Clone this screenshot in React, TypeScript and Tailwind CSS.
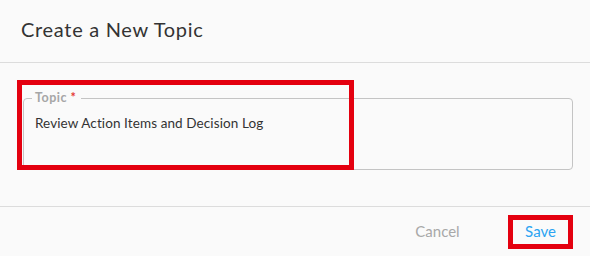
import React from 'react';

export default function App() {
  return (
    <div className="w-[590px] h-[256px] bg-[#fafafa] flex flex-col overflow-hidden" style={{ fontFamily: 'Lato, "Noto Sans", sans-serif' }}>
      {/* header */}
      <div className="h-[63px] shrink-0 border-b border-[#dcdcdc] pl-[21px] pt-[17px]">
        <h1 className="text-[20px] leading-[24px] tracking-[0.7px] text-[#333333] font-normal">Create a New Topic</h1>
      </div>

      {/* body */}
      <div className="relative h-[143px] shrink-0 pt-[27px]">
        <fieldset className="ml-[23px] mr-[17px] border border-[#c4c4c4] rounded-[4px] pl-[8px] pr-3 h-[80px]">
          <legend className="px-[3px] pr-[5px] text-[12.5px] leading-[16px] tracking-[0.5px] font-bold text-[#a6a6a6]">
            Topic <span className="text-[#e53935]">*</span>
          </legend>
          <div className="pl-[3px] mt-[8px] text-[13.5px] leading-[18px] tracking-[0.1px] text-[#333333]">
            Review Action Items and Decision Log
          </div>
        </fieldset>
        {/* annotation box */}
        <div className="absolute left-[17px] top-[17px] w-[337px] h-[90px] border-[5px] border-[#e4000f] pointer-events-none" />
      </div>

      {/* footer */}
      <div className="h-[50px] shrink-0 border-t border-[#dcdcdc] flex items-center justify-end pr-[17px] gap-[38px]">
        <button className="w-[65px] h-[34px] text-[15px] text-[#a8a8a8]">Cancel</button>
        <button className="w-[65px] h-[34px] border-[5px] border-[#e4000f] text-[15px] text-[#2ba4f2]">Save</button>
      </div>
    </div>
  );
}
